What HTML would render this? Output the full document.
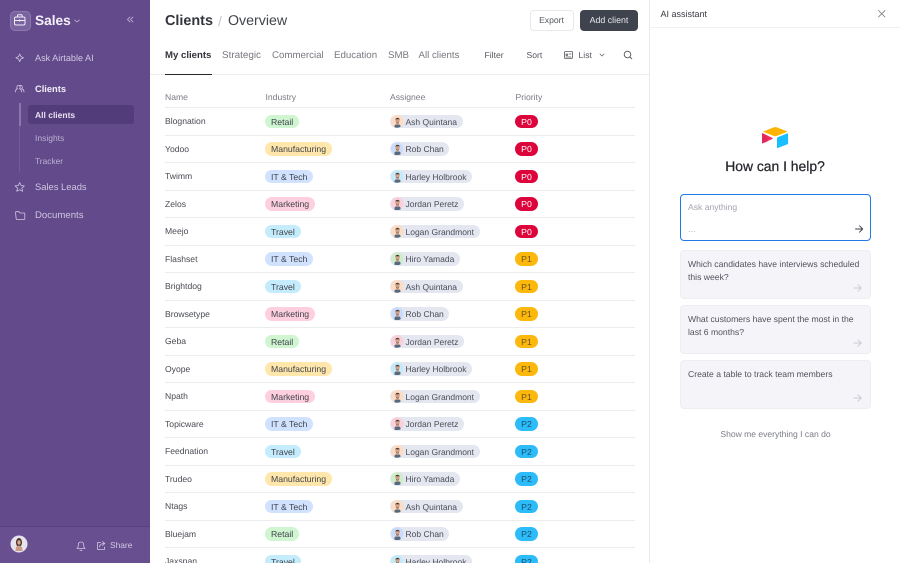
<!DOCTYPE html>
<html><head><meta charset="utf-8"><style>
html,body{margin:0;padding:0;width:900px;height:563px;overflow:hidden;background:#fff;font-family:"Liberation Sans",sans-serif;text-rendering:geometricPrecision}
#p{position:relative;width:900px;height:563px;overflow:hidden}
.a,.r,.c{position:absolute;white-space:nowrap}
svg{position:absolute;overflow:visible}
.st{fill:none;stroke-linecap:round;stroke-linejoin:round}
.side{left:0;top:0;width:150px;height:563px;background:#624a8b}
.nav{left:35px;font-size:9.100px;color:#d3c9e2;line-height:12px}
.r{left:165px;width:470px;height:27.500px;border-bottom:1px solid #ececf0;box-sizing:border-box}
.n{left:0;top:7px;font-size:8.600px;line-height:13px;color:#484a52}
.c{top:6.500px;height:13.500px;line-height:14px;border-radius:7px;font-size:8.700px;text-align:center;box-sizing:border-box}
.i{left:100px;padding:0 6px;color:#40434a}
.re{background:#cff5d1}.ma{background:#ffe6ab}.it{background:#d0e2fe}.mk{background:#fecfdf}.tr{background:#c4ecfd}
.as{left:225px;padding:0 5.500px 0 15.500px;background:#e4e7ef;color:#4b4e5a;font-size:8.500px}
.as svg{left:.5px;top:.25px;width:13px;height:13px;overflow:hidden;clip-path:circle(50%)}
.pr{left:350px;width:23px;color:#fff}
.p0{background:#dc043b}.p1{background:#fdb80e;color:#6b5316}.p2{background:#2cbcfa;color:#174f6e}
.h{top:91.500px;font-size:8.600px;line-height:11px;color:#7a7c85}
.tab{top:50px;font-size:9.700px;line-height:12px;color:#77787f}
.tool{top:50px;font-size:8.600px;line-height:11px;color:#55575f}
.sg{left:680px;width:191px;height:49px;background:#f5f4f9;border:1px solid #eeedf2;border-radius:4px;box-sizing:border-box;font-size:8.620px;line-height:12.500px;color:#50525b;padding:7px 7px}
</style></head><body><div id="p">
<svg width="0" height="0" style="position:absolute"><defs>
<g id="f"><path d="M3.500 13V10.700Q4 9.500 5.400 9.200H7.600Q9 9.500 9.500 10.700V13Z" fill="#55697f"/><rect x="5.300" y="7" width="2.400" height="3" fill="#c99b80"/><ellipse cx="6.500" cy="5.500" rx="2.100" ry="2.900" fill="#d0a088"/><path d="M4.300 4.800C4.300 2.300 8.700 2.300 8.700 4.800L8.100 4.200H4.900Z" fill="#4a3a33"/><path d="M5 6.800Q6.500 8.900 8 6.800L7.700 8Q6.500 8.700 5.300 8Z" fill="#7a5c50"/></g>
</defs></svg>

<div class="a side"></div>
<div class="a" style="left:0;top:526px;width:150px;height:37px;background:#674f90;border-top:1px solid #59427f;box-sizing:border-box"></div>
<div class="a" style="left:10px;top:11px;width:19px;height:18px;border-radius:5px;background:#7a64a0;border:.5px solid #8d78b0"></div>
<svg style="left:0;top:0" width="150" height="230" class="st">
<g stroke="#f0ebf6" stroke-width="1"><rect x="14.500" y="17" width="10.500" height="8" rx="1.500"/><path d="M17.500 17v-1.400q0-.8.8-.8h3q.8 0 .8.8V17M14.500 20.500h10.500M19.700 19.800v1.400"/></g>
<path d="M74.500 20l2.500 2 2.500-2" stroke="#cfc5df" stroke-width=".7"/>
<path d="M130 17l-2.500 2.500 2.500 2.500M133 17l-2.500 2.500 2.500 2.500" stroke="#c7bbd9" stroke-width=".8"/>
<path d="M19.700 54l1.200 2.600 2.600 1.200-2.600 1.200-1.200 2.600-1.200-2.600-2.600-1.200 2.600-1.200Z" stroke="#d3c9e2" stroke-width=".8"/>
<g stroke="#d3c9e2" stroke-width=".8"><path d="M15.500 92c0-2 .6-3 2-3.300-1-.7-1-3.200 1-3.200s2 2.500 1 3.200c1.400.3 2 1.300 2 3.300M19.500 85.500c2-.4 3 .7 2.800 2-.1.6-.3 1-.7 1.200 1.300.3 2.400 1.300 2.400 3.300"/></g>
<path d="M19.700 182.500l1.400 3 3.200.4-2.400 2.200.7 3.200-2.900-1.600-2.900 1.600.7-3.200-2.400-2.200 3.200-.4Z" stroke="#d3c9e2" stroke-width=".8"/>
<path d="M15.500 212.500q0-.8.8-.8h2.700l1 1.300h4q.8 0 .8.8v5q0 .8-.8.8h-7q-.8 0-.8-.8Z" stroke="#d3c9e2" stroke-width=".8"/>
</svg>
<div class="a" style="left:35px;top:11.500px;font-size:13.700px;line-height:18px;font-weight:700;color:#f4f0f8">Sales</div>
<div class="a nav" style="top:52px">Ask Airtable AI</div>
<div class="a nav" style="top:83px;font-weight:700;color:#f2eef6;font-size:9.300px">Clients</div>
<div class="a" style="left:19px;top:103px;width:1px;height:69px;background:#725b9a"></div>
<div class="a" style="left:19px;top:103px;width:1.500px;height:23px;background:#8b76ad"></div>
<div class="a" style="left:28px;top:105px;width:105.500px;height:18.500px;background:#533c7a;border-radius:3px"></div>
<div class="a nav" style="top:108.500px;font-size:8.500px;font-weight:700;color:#e6dff0">All clients</div>
<div class="a nav" style="top:131.500px;font-size:8.500px;color:#bdb0d2">Insights</div>
<div class="a nav" style="top:154.500px;font-size:8.400px;color:#bdb0d2">Tracker</div>
<div class="a nav" style="top:181px;font-size:9.400px;color:#cfc5df">Sales Leads</div>
<div class="a nav" style="top:210px;font-size:9.600px;color:#cfc5df">Documents</div>
<svg style="left:9.500px;top:535px" width="18" height="18"><circle cx="9" cy="9" r="8.500" fill="#e6e2ee"/><ellipse cx="9" cy="7.500" rx="3" ry="4.500" fill="#4a3128"/><ellipse cx="9" cy="7.500" rx="1.700" ry="2.200" fill="#d9a88c"/><path d="M5.500 16q0-5.500 3.500-5.500t3.500 5.500Z" fill="#c99c88"/></svg>
<svg style="left:0;top:530px" width="150" height="30" class="st"><g stroke="#d3c9e2" stroke-width=".8"><path d="M77 18.500q1.300-1 1.300-3.500 0-3 2.700-3t2.700 3q0 2.500 1.300 3.500ZM80 20.300h2"/><path d="M100.500 12.500h-3v7h7v-2.500M99.500 17q.5-3.500 4.500-3.500M102.500 11.500l2.300 2-2.300 2"/></g></svg>
<div class="a nav" style="left:110px;top:539px;font-size:8.400px;color:#d3c9e2">Share</div>

<div class="a" style="left:165px;top:12px;font-size:14.400px;line-height:19px;font-weight:700;color:#33353c">Clients</div>
<div class="a" style="left:218px;top:12px;font-size:14px;line-height:19px;color:#c4c5cb">/</div>
<div class="a" style="left:228px;top:12px;font-size:14.200px;line-height:19px;color:#43454d">Overview</div>
<div class="a" style="left:529.500px;top:10px;width:44px;height:20.500px;border:1px solid #e8e8ec;border-radius:4px;box-sizing:border-box;text-align:center;font-size:8.600px;line-height:19px;color:#55575f">Export</div>
<div class="a" style="left:580px;top:10px;width:58px;height:20.500px;background:#3f434d;border-radius:4px;text-align:center;font-size:8.800px;line-height:20.500px;color:#e8e9ec">Add client</div>

<div class="a tab" style="left:165px;font-weight:700;color:#33353c;font-size:9.600px">My clients</div>
<div class="a tab" style="left:222px;font-size:9.900px">Strategic</div>
<div class="a tab" style="left:272px">Commercial</div>
<div class="a tab" style="left:334px">Education</div>
<div class="a tab" style="left:388px">SMB</div>
<div class="a tab" style="left:418.500px">All clients</div>
<div class="a tool" style="left:484.500px">Filter</div>
<div class="a tool" style="left:526.500px">Sort</div>
<div class="a tool" style="left:578.500px">List</div>
<svg style="left:0;top:0" width="650" height="80" class="st"><g stroke="#55575f" stroke-width=".8"><rect x="564.500" y="51.500" width="8" height="7" rx=".8"/><path d="M566 54h1.500v1.500H566ZM569 54h2M566 57h5"/></g><path d="M600 54l2 2 2-2" stroke="#66686f" stroke-width=".8"/><g stroke="#55575f" stroke-width=".9"><circle cx="627.500" cy="54.500" r="3.300"/><path d="M630 57l1.800 1.800"/></g></svg>
<div class="a" style="left:150px;top:74px;width:499px;height:1px;background:#ececf0"></div>
<div class="a" style="left:165px;top:73.500px;width:47px;height:1.300px;background:#26282e"></div>

<div class="a h" style="left:165px">Name</div>
<div class="a h" style="left:265.500px">Industry</div>
<div class="a h" style="left:390px">Assignee</div>
<div class="a h" style="left:515.500px">Priority</div>
<div class="a" style="left:165px;top:107px;width:470px;height:1px;background:#ececf0"></div>

<div class="r" style="top:108px"><div class="a n">Blognation</div><div class="c i re">Retail</div><div class="c as"><svg viewBox="0 0 13 13"><circle cx="6.500" cy="6.500" r="6.500" fill="#fcdcc5"/><use href="#f"/></svg>Ash Quintana</div><div class="c pr p0">P0</div></div>
<div class="r" style="top:135.500px"><div class="a n">Yodoo</div><div class="c i ma">Manufacturing</div><div class="c as"><svg viewBox="0 0 13 13"><circle cx="6.500" cy="6.500" r="6.500" fill="#c9dcfc"/><use href="#f"/></svg>Rob Chan</div><div class="c pr p0">P0</div></div>
<div class="r" style="top:163px"><div class="a n">Twimm</div><div class="c i it">IT &amp; Tech</div><div class="c as"><svg viewBox="0 0 13 13"><circle cx="6.500" cy="6.500" r="6.500" fill="#c2ecfc"/><use href="#f"/></svg>Harley Holbrook</div><div class="c pr p0">P0</div></div>
<div class="r" style="top:190.500px"><div class="a n">Zelos</div><div class="c i mk">Marketing</div><div class="c as"><svg viewBox="0 0 13 13"><circle cx="6.500" cy="6.500" r="6.500" fill="#fbd0dc"/><use href="#f"/></svg>Jordan Peretz</div><div class="c pr p0">P0</div></div>
<div class="r" style="top:218px"><div class="a n">Meejo</div><div class="c i tr">Travel</div><div class="c as"><svg viewBox="0 0 13 13"><circle cx="6.500" cy="6.500" r="6.500" fill="#fcdcc5"/><use href="#f"/></svg>Logan Grandmont</div><div class="c pr p0">P0</div></div>
<div class="r" style="top:245.500px"><div class="a n">Flashset</div><div class="c i it">IT &amp; Tech</div><div class="c as"><svg viewBox="0 0 13 13"><circle cx="6.500" cy="6.500" r="6.500" fill="#cdeecb"/><use href="#f"/></svg>Hiro Yamada</div><div class="c pr p1">P1</div></div>
<div class="r" style="top:273px"><div class="a n">Brightdog</div><div class="c i tr">Travel</div><div class="c as"><svg viewBox="0 0 13 13"><circle cx="6.500" cy="6.500" r="6.500" fill="#fcdcc5"/><use href="#f"/></svg>Ash Quintana</div><div class="c pr p1">P1</div></div>
<div class="r" style="top:300.500px"><div class="a n">Browsetype</div><div class="c i mk">Marketing</div><div class="c as"><svg viewBox="0 0 13 13"><circle cx="6.500" cy="6.500" r="6.500" fill="#c9dcfc"/><use href="#f"/></svg>Rob Chan</div><div class="c pr p1">P1</div></div>
<div class="r" style="top:328px"><div class="a n">Geba</div><div class="c i re">Retail</div><div class="c as"><svg viewBox="0 0 13 13"><circle cx="6.500" cy="6.500" r="6.500" fill="#fbd0dc"/><use href="#f"/></svg>Jordan Peretz</div><div class="c pr p1">P1</div></div>
<div class="r" style="top:355.500px"><div class="a n">Oyope</div><div class="c i ma">Manufacturing</div><div class="c as"><svg viewBox="0 0 13 13"><circle cx="6.500" cy="6.500" r="6.500" fill="#c2ecfc"/><use href="#f"/></svg>Harley Holbrook</div><div class="c pr p1">P1</div></div>
<div class="r" style="top:383px"><div class="a n">Npath</div><div class="c i mk">Marketing</div><div class="c as"><svg viewBox="0 0 13 13"><circle cx="6.500" cy="6.500" r="6.500" fill="#fcdcc5"/><use href="#f"/></svg>Logan Grandmont</div><div class="c pr p1">P1</div></div>
<div class="r" style="top:410.500px"><div class="a n">Topicware</div><div class="c i it">IT &amp; Tech</div><div class="c as"><svg viewBox="0 0 13 13"><circle cx="6.500" cy="6.500" r="6.500" fill="#fbd0dc"/><use href="#f"/></svg>Jordan Peretz</div><div class="c pr p2">P2</div></div>
<div class="r" style="top:438px"><div class="a n">Feednation</div><div class="c i tr">Travel</div><div class="c as"><svg viewBox="0 0 13 13"><circle cx="6.500" cy="6.500" r="6.500" fill="#fcdcc5"/><use href="#f"/></svg>Logan Grandmont</div><div class="c pr p2">P2</div></div>
<div class="r" style="top:465.500px"><div class="a n">Trudeo</div><div class="c i ma">Manufacturing</div><div class="c as"><svg viewBox="0 0 13 13"><circle cx="6.500" cy="6.500" r="6.500" fill="#cdeecb"/><use href="#f"/></svg>Hiro Yamada</div><div class="c pr p2">P2</div></div>
<div class="r" style="top:493px"><div class="a n">Ntags</div><div class="c i it">IT &amp; Tech</div><div class="c as"><svg viewBox="0 0 13 13"><circle cx="6.500" cy="6.500" r="6.500" fill="#fcdcc5"/><use href="#f"/></svg>Ash Quintana</div><div class="c pr p2">P2</div></div>
<div class="r" style="top:520.500px"><div class="a n">Bluejam</div><div class="c i re">Retail</div><div class="c as"><svg viewBox="0 0 13 13"><circle cx="6.500" cy="6.500" r="6.500" fill="#c9dcfc"/><use href="#f"/></svg>Rob Chan</div><div class="c pr p2">P2</div></div>
<div class="r" style="top:548px"><div class="a n">Jaxspan</div><div class="c i tr">Travel</div><div class="c as"><svg viewBox="0 0 13 13"><circle cx="6.500" cy="6.500" r="6.500" fill="#c2ecfc"/><use href="#f"/></svg>Harley Holbrook</div><div class="c pr p2">P2</div></div>

<div class="a" style="left:649px;top:0;width:1px;height:563px;background:#e9e9ee"></div>
<div class="a" style="left:650px;top:27px;width:250px;height:1px;background:#f0f0f3"></div>
<div class="a" style="left:660.500px;top:8.500px;font-size:9px;line-height:11px;color:#3a3c44">AI assistant</div>
<svg style="left:0;top:0" width="900" height="30" class="st"><path d="M878.500 10.500l6.500 6.500M885 10.500l-6.500 6.500" stroke="#74767e" stroke-width=".8"/></svg>
<svg style="left:762px;top:127px" width="27" height="22"><path d="M12 .3 1.800 4.200q-.9.400 0 .8L12 9q1.300.5 2.600 0l10.200-4q.9-.4 0-.8L14.600.3Q13.300-.1 12 .3Z" fill="#fcb400"/><path d="M15 11v9.600q0 .7.700.4l9.800-3.800q.6-.2.600-.8V6.800q0-.7-.7-.4L15.600 10.200q-.6.300-.6.800Z" fill="#18bfff"/><path d="M0 6.800v9q0 .9.800.5l9.700-4.400q.9-.4 0-.9L1 6.400q-1-.4-1 .4Z" fill="#f82b60"/><path d="M1 6.400 5.500 8.700v6l-4.700 1.600Q0 16.700 0 15.800v-9q0-.8 1-.4Z" fill="#d32a56" opacity=".6"/></svg>
<div class="a" style="left:650px;width:250px;top:157px;text-align:center;font-size:13.900px;line-height:19px;color:#26282e;-webkit-text-stroke:.25px #26282e">How can I help?</div>
<div class="a" style="left:680px;top:194px;width:191px;height:47px;border:1.800px solid #2079e8;border-radius:4px;box-sizing:border-box"></div>
<div class="a" style="left:688px;top:200.500px;font-size:8.600px;line-height:12px;color:#a3a5ad">Ask anything</div>
<div class="a" style="left:688px;top:223px;font-size:9px;line-height:12px;color:#b0b2b9">...</div>
<div class="a sg" style="top:250px;height:48.500px">Which candidates have interviews scheduled<br>this week?</div>
<div class="a sg" style="top:305px">What customers have spent the most in the<br>last 6 months?</div>
<div class="a sg" style="top:360px">Create a table to track team members</div>
<svg style="left:0;top:0" width="900" height="420" class="st"><path d="M855.500 229h7M859.500 225.800l3.200 3.200-3.200 3.200" stroke="#3a3c44" stroke-width=".9"/><g stroke="#c9cad1" stroke-width=".9"><path d="M854 288h7M858 284.800l3.200 3.200-3.200 3.200"/><path d="M854 343h7M858 339.800l3.200 3.200-3.200 3.200"/><path d="M854 398h7M858 394.800l3.200 3.200-3.200 3.200"/></g></svg>
<div class="a" style="left:650px;width:251px;top:427.500px;text-align:center;font-size:8.550px;line-height:12px;color:#7a7c85">Show me everything I can do</div>
</div></body></html>
